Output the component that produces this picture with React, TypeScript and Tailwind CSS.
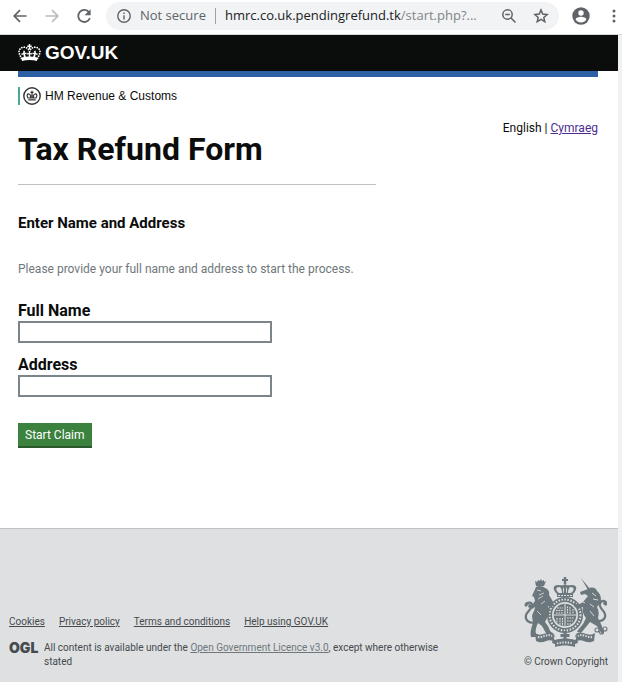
import type { ReactNode } from "react";

const footerLinks = ["Cookies", "Privacy policy", "Terms and conditions", "Help using GOV.UK"];

function ToolbarButton({ label, className, children }: { label: string; className: string; children: ReactNode }) {
  return (
    <button type="button" aria-label={label} className={`flex shrink-0 items-center justify-center ${className}`}>
      {children}
    </button>
  );
}

function BrowserBar() {
  return (
    <div className="flex h-[35px] items-center border-b border-[#d5d7da] bg-white pb-0.5 pl-3 font-['Open_Sans','Noto_Sans',sans-serif] text-[#5f6368]">
      <ToolbarButton label="Back" className="size-4">
        <svg viewBox="0 0 16 16" className="size-4" fill="none" stroke="#5f6368" strokeWidth="1.7">
          <path d="M14.5 8H2.5M8 2.2 2.2 8 8 13.8" />
        </svg>
      </ToolbarButton>
      <ToolbarButton label="Forward" className="ml-4 size-4">
        <svg viewBox="0 0 16 16" className="size-4" fill="none" stroke="#babcbe" strokeWidth="1.7">
          <path d="M1.5 8h12M8 2.2 13.8 8 8 13.8" />
        </svg>
      </ToolbarButton>
      <ToolbarButton label="Reload" className="ml-4 size-4">
        <svg viewBox="0 0 16 16" className="size-4">
          <path d="M13.1 4.4A6 6 0 1 0 13.9 10" fill="none" stroke="#5f6368" strokeWidth="1.8" />
          <path d="M14.6 1.2v6H8.6z" fill="#5f6368" />
        </svg>
      </ToolbarButton>
      <div className="ml-3.5 flex h-7 min-w-0 flex-1 items-center rounded-full bg-[#f1f3f4] pl-[11px] pr-2.5 text-[13px]">
        <svg viewBox="0 0 14 14" className="size-3.5 shrink-0" fill="none" stroke="#5f6368" strokeWidth="1.4">
          <circle cx="7" cy="7" r="6.2" />
          <path d="M7 6.2v4.2M7 3.4v1.5" />
        </svg>
        <span className="ml-[9px] whitespace-nowrap">Not secure</span>
        <span className="mx-[9px] h-4 w-px shrink-0 bg-[#9aa0a6]" />
        <span className="min-w-0 flex-1 whitespace-nowrap text-[#202124]">
          hmrc.co.uk.pendingrefund.tk<span className="text-[#80868b]">/start.php?...</span>
        </span>
        <ToolbarButton label="Zoom" className="ml-2 size-4">
          <svg viewBox="0 0 16 16" className="size-4" fill="none" stroke="#5f6368" strokeWidth="1.5">
            <circle cx="6.5" cy="6.5" r="4.7" />
            <path d="M10 10l4.5 4.5M4.2 6.5h4.6" />
          </svg>
        </ToolbarButton>
        <ToolbarButton label="Bookmark" className="ml-4 size-4">
          <svg viewBox="0 0 16 16" className="size-4" fill="none" stroke="#5f6368" strokeWidth="1.5">
            <path d="M8 2l1.7 4.1 4.4.4-3.3 2.9 1 4.3L8 11.400l-3.8 2.3 1-4.3-3.3-2.9 4.4-.4z" />
          </svg>
        </ToolbarButton>
      </div>
      <ToolbarButton label="Profile" className="ml-3 size-5">
        <svg viewBox="0 0 20 20" className="size-5">
          <circle cx="10" cy="10" r="8.7" fill="#5f6368" />
          <circle cx="10" cy="7" r="2.7" fill="#fff" />
          <path d="M4.6 13.6c0-2 3.6-2.9 5.4-2.9s5.4.9 5.4 2.9a6.6 6.6 0 0 1-10.8 0z" fill="#fff" />
        </svg>
      </ToolbarButton>
      <ToolbarButton label="Menu" className="ml-[15px] size-4">
        <svg viewBox="0 0 16 16" className="size-4" fill="#5f6368">
          <circle cx="8" cy="3" r="1.5" />
          <circle cx="8" cy="8" r="1.5" />
          <circle cx="8" cy="13" r="1.5" />
        </svg>
      </ToolbarButton>
    </div>
  );
}

function Crown({ className }: { className: string }) {
  return (
    <svg viewBox="0 0 46 36" className={className} fill="currentColor" aria-hidden="true">
      {/* orb and cross */}
      <path d="M21.500 0h3v3h3v3h-3v4h-3V6h-3V3h3z" />
      {/* beaded arches */}
      <g fill="none" stroke="currentColor" strokeWidth="3.600" strokeLinecap="round" strokeDasharray=".1 4.800">
        <path d="M21 11C15 3 3 6 2 15c0 5 3 9 5 14" />
        <path d="M25 11c6-8 18-5 19 4 0 5-3 9-5 14" />
      </g>
      {/* front ornaments */}
      <path d="M21.300 14h3.400l-.5 4.500 3.300-1v4l-3.300-1 .6 6h-3.600l.6-6-3.300 1v-4l3.300 1z" />
      <path d="m11 13 3 1-.5 4 3.500-1 .3 3.500-3.500-.5 2 6-4 1-1-6.500-3.300 2-1-3.500 3.500-.5zM35 13l-3 1 .5 4-3.500-1-.3 3.500 3.500-.5-2 6 4 1 1-6.500 3.300 2 1-3.500-3.500-.5z" />
      {/* band */}
      <path d="M7 27c10-3 22-3 32 0l-1 7c-9-3-21-3-30 0z" />
    </svg>
  );
}

function HmrcBadge() {
  return (
    <svg viewBox="0 0 18 18" className="size-[18px] shrink-0" fill="none" stroke="#333" aria-hidden="true">
      <circle cx="9" cy="9" r="8.200" strokeWidth="1.400" />
      <path
        d="M5.300 12.800h7.400M5.200 11.300C3 8.200 4.500 6.400 6.300 7c1.500.4 1.200 2 1.200 4M12.800 11.300c2.200-3.100.7-4.900-1.100-4.300-1.500.4-1.200 2-1.200 4M9 3.800v7.500M7.500 5.300h3M5.200 11h7.600M7 9h4"
        strokeWidth="1.200"
      />
    </svg>
  );
}

function CoatOfArms() {
  return (
    <svg viewBox="0 0 84 70" className="h-[70px] w-[84px]" fill="#6b777c" aria-hidden="true">
      {/* crown */}
      <path d="M39.800 0h2.400v2H44v2h-1.800v3h-2.400V4H38V2h1.800z" />
      <path d="M33 20v-3c-5-5-4-9 1-9 3 0 5 1 7-1 2 2 4 1 7 1 5 0 6 4 1 9v3z" />
      <path d="M35 16c-4-3-3-6 0-6 2 0 3 3 3 6zM47 16c4-3 3-6 0-6-2 0-3 3-3 6zM39.500 16c-1-3-.5-5 .5-6v6zM42.500 16c1-3 .5-5-.5-6v6z" fill="#dee0e2" />
      <path d="M34 18.500h14" stroke="#dee0e2" strokeWidth="1" strokeDasharray="2 1" />
      {/* garter and shield */}
      <circle cx="41" cy="38" r="15.500" fill="none" stroke="#6b777c" strokeWidth="5" />
      <circle cx="41" cy="38" r="15.500" fill="none" stroke="#dee0e2" strokeWidth="2" strokeDasharray="1.500 1.500" />
      <circle cx="41" cy="38" r="12" fill="#dee0e2" />
      <circle cx="41" cy="38" r="11.300" />
      <path d="M41 27v22M30 38h22" stroke="#dee0e2" strokeWidth="1" />
      <path d="M33 31h6M32 33.500h7M32 36h7M43.500 29.500v7M46 30v7M49 32v5M33 41v5M36 41v7M38.500 41v8M43 41h7M43 44h6M43 47h4" stroke="#dee0e2" strokeWidth="1.100" strokeDasharray="1.700 .8" />
      {/* lion */}
      <path d="m12 9-1-5 2 1 1-2 1.500 1L17 2l1 2 2-1v2l2-1-2 5z" />
      <path d="M12 10c3-2 7-1 9 1 3 1 5 4 4 7l3 5c2 3 2 5 0 7l-4-1 1 4c1 4 0 6-2 8l-2 4 3 4c2 4 2 6 5 7l-1 2h-5l-5-9-4-3c-2 4-3 8-2 11l3 1-1 2H7c-1-5 0-8 2-14l-1-7c1-4 3-6 3-9l-3 2-4-2 1-3 3 1 3-4-1-4-2-1z" />
      <path d="M10 46C4 46 1 43 2 38c1-4 6-5 6-10 0-3-4-3-6-1" fill="none" stroke="#6b777c" strokeWidth="2.200" />
      <path d="M3 25c-3 1-3 4-1 5l3-3z" />
      <path d="m13 13 4 1M15 18l5-2M14 22l5-3M17 27l4-3M13 34l4 4" stroke="#dee0e2" strokeWidth=".8" />
      {/* unicorn */}
      <path d="m57 1 9 11-2 1z" />
      <path d="M64 12c4-3 8-1 9 2 4 3 4 7 4 11l-4 5c2 4 2 7 1 11l3 6 3 8-2 2-5-8-7-4-4 5-5 6-4-1 1-2 5-6 3-6c-3-4-4-7-3-11l-5 2-4-3 1-3 3 2 5-3 5-6-3-2-4 1-1-3z" />
      <path d="M72 44c8 1 11-4 8-9-3-4-6-7-3-10 2-2 5-1 5 1" fill="none" stroke="#6b777c" strokeWidth="2.200" />
      <path d="M80 24c3 0 4 3 2 5l-3-2z" />
      <path d="m68 16 4 3M69 22l5 1M66 27l4 3M57 24l4 2M66 34l4 5" stroke="#dee0e2" strokeWidth=".9" />
      <g fill="none" stroke="#6b777c" strokeWidth="1.100">
        <circle cx="73" cy="53" r="2" />
        <circle cx="77.500" cy="55" r="2" />
        <circle cx="81" cy="52" r="2" />
      </g>
      {/* motto ribbon */}
      <path d="M11 56c7 5 11-3 19 1l-1 7c-6-3-9 4-17 0zM71 56c-7 5-11-3-19 1l1 7c6-3 9 4 17 0z" />
      <path d="M30 57c2 4-2 4 1 6 6-2 14-2 20 0 3-2-1-2 1-6l2 9-3 1v3c-7-2-13-2-20 0v-3l-3-1z" />
      <path d="M14 60c5 1 9-4 14-1M68 60c-5 1-9-4-14-1M33 66.500c5-1.500 11-1.500 16 0" fill="none" stroke="#dee0e2" strokeWidth="2" strokeDasharray="1.400 1.300" />
      <path d="M39.500 54h3v3h3v3h-3v3h-3v-3h-3v-3h3z" />
    </svg>
  );
}

function Field({ id, label }: { id: string; label: string }) {
  return (
    <div className="mb-3">
      <label htmlFor={id} className="block text-base font-bold leading-5 text-[#0b0c0c]">
        {label}
      </label>
      <input id={id} type="text" className="block h-[22px] w-full max-w-[254px] border-2 border-[#7c858a] bg-white px-1 text-sm" />
    </div>
  );
}

export default function App() {
  return (
    <div className="min-h-screen bg-white text-[#0b0c0c]">
      <BrowserBar />
      <div className="border-r-4 border-[#f1f1f1] font-[Roboto,'Noto_Sans',sans-serif]">
        <header className="flex h-9 items-center bg-[#0b0c0c] px-[18px] text-white">
          <Crown className="h-[18px] w-[23px]" />
          <span className="ml-1 font-['Liberation_Sans',Arial,sans-serif] text-[19px] font-bold leading-6">GOV.UK</span>
        </header>

        <main className="pb-20 pl-[18px] pr-5">
          <div className="h-1.5 bg-[#2b5fa6]" />
          <div className="mt-2.5 flex h-[18px] items-center gap-1 border-l-2 border-[#4fa59c] pl-[3px] font-['Liberation_Sans',Arial,sans-serif] text-xs">
            <HmrcBadge />
            <span>HM Revenue &amp; Customs</span>
          </div>
          <div className="mt-4 flex items-start justify-between">
            <h1 className="mt-2 text-[32px] font-bold leading-10">Tax Refund Form</h1>
            <div className="text-xs leading-[14px]">
              English |{" "}
              <a href="#" className="text-[#4c2c92] underline">
                Cymraeg
              </a>
            </div>
          </div>
          <hr className="mt-[15px] max-w-[358px] border-t border-[#bfc1c3]" />
          <h2 className="mt-7 text-[15px] font-bold leading-5">Enter Name and Address</h2>
          <p className="mt-[26px] text-xs leading-5 text-[#6f777b]">Please provide your full name and address to start the process.</p>

          <form className="mt-[22px]" onSubmit={(e) => e.preventDefault()}>
            <Field id="full-name" label="Full Name" />
            <Field id="address" label="Address" />
            <button type="submit" className="mt-[26px] block h-[25px] border-b-2 border-[#2b5a2f] bg-[#3b823e] px-[7px] text-xs text-white">
              Start Claim
            </button>
          </form>
        </main>

        <footer className="flex items-end justify-between border-t border-[#bfc1c3] bg-[#dee0e2] pb-3.5 pl-[9px] pr-2.5 pt-12 text-[10px] leading-[14px] text-[#454a4d]">
          <div className="max-w-[440px]">
            <ul className="flex flex-wrap gap-x-3.5">
              {footerLinks.map((link) => (
                <li key={link}>
                  <a href="#" className="underline">
                    {link}
                  </a>
                </li>
              ))}
            </ul>
            <div className="mt-3 flex items-start">
              <span className="w-[35px] shrink-0 font-[Inter,sans-serif] text-sm font-black leading-[14px]">OGL</span>
              <p>
                All content is available under the{" "}
                <a href="#" className="text-[#6f777b] underline">
                  Open Government Licence v3.0
                </a>
                , except where otherwise stated
              </p>
            </div>
          </div>
          <div className="flex shrink-0 flex-col items-center gap-2">
            <CoatOfArms />
            <span>© Crown Copyright</span>
          </div>
        </footer>
      </div>
    </div>
  );
}
